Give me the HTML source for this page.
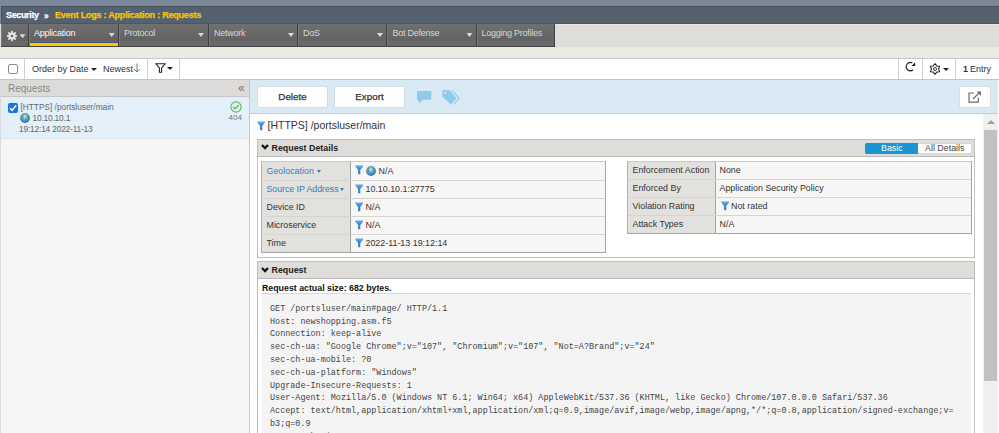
<!DOCTYPE html>
<html><head><meta charset="utf-8">
<style>
*{box-sizing:border-box;margin:0;padding:0}
html,body{width:999px;height:433px;overflow:hidden;background:#f7f6f4;font-family:"Liberation Sans",sans-serif;position:relative}
.a{position:absolute;white-space:nowrap}
svg{position:absolute;overflow:visible}
#top{left:0;top:0;width:999px;height:24px;background:#7b899a}
#hdr{left:1px;top:6px;width:998px;height:18px;background:#55616f;border-top:1px solid #454e58;border-left:1px solid #4a535d;box-shadow:inset 0 -1px 0 #4c5560}
#hdr .t{font-size:9px;font-weight:bold;top:3px;letter-spacing:-0.1px;-webkit-text-stroke:0.25px currentColor}
#tabrow{left:0;top:24px;width:999px;height:23px;background:#dfddd8;border-top:1px solid #e9e7e3}
.tab{top:24px;height:23px;background:linear-gradient(#707070,#626262 75%,#6a6a6a 76%,#686868);border-right:1px solid #3f3f3f;border-bottom:1px solid #454545;box-shadow:inset 1px 0 0 #787878;color:#d6d6d6;font-size:9px;letter-spacing:-0.25px}
.tab span{position:absolute;top:4px;left:5px}
.tab i{position:absolute;top:9px;width:6px;height:4px;background:linear-gradient(to bottom right,transparent 50%,#dadada 50%) ;clip-path:polygon(0 0,100% 0,50% 100%);background:#dadada}
#band{left:0;top:47px;width:999px;height:11px;background:#ebe9e4}
#tb{left:0;top:58px;width:999px;height:22px;background:#fff;border-top:1px solid #c9c9c9;border-bottom:1px solid #c4c4c4}
.sep{top:59px;width:1px;height:20px;background:#cfcfcf}
.tbt{top:64px;font-size:9px;color:#333}
#lp{left:0;top:80px;width:250px;height:353px;background:#f7f6f4;border-left:1px solid #dcdcdc;border-right:1px solid #c8c8c8}
#lph{left:1px;top:80px;width:248px;height:17px;background:#dcdbd9;border-bottom:1px solid #c6c6c6;color:#888;font-size:10px}
#row{left:1px;top:97px;width:248px;height:42px;background:#e4f0f9;border-bottom:1px solid #dde6ee}
.rt{font-size:8.3px;color:#666}
#rp{left:250px;top:80px;width:749px;height:353px;background:#fff}
#ab{left:250px;top:80px;width:748px;height:34px;background:#d9eaf5;border-bottom:1px solid #c2ccd4}
.btn{top:86px;height:22px;padding-top:0px;background:#fff;border:1px solid #d4dde4;border-radius:2px;color:#333;font-size:9.8px;text-align:center;line-height:19px;-webkit-text-stroke:0.25px #333}
.sec{left:257px;width:718px;border:1px solid #c0c0c0;background:#fff}
.sech{left:258px;width:716px;height:17px;background:#dfddd9;border-bottom:1px solid #bababa;font-size:8.9px;font-weight:bold;color:#222}
.sech span{top:3px}
.tbl{background:#f7f6f4;border:1px solid #b0b0b0;border-top-color:#cacaca;border-right-color:#a6a6a6;border-bottom-color:#a3a3a3}
.lcol{background:#e3e1dd}
.rl{height:1px;background:#d4d4d2}
.tt{font-size:8.9px;color:#333;margin-top:1px}
.lk{color:#3a7cc0}
#code{left:262px;top:293px;width:709px;height:140px;background:#f4f4f4;border-top:1px solid #d8d8d8;font-family:"Liberation Mono",monospace;font-size:8.45px;line-height:12.8px;color:#444;padding:8.8px 0 0 8px;white-space:pre}
#sb{left:983px;top:114px;width:15px;height:319px;background:#f0f0f0}
#thumb{left:984px;top:130px;width:13px;height:251px;background:#c1c1c1}
.caret{position:absolute;width:0;height:0;border-left:3px solid transparent;border-right:3px solid transparent;border-top:3px solid #222}
</style></head><body>
<svg width="0" height="0" style="left:0;top:0"><defs>
<linearGradient id="fb" x1="0" y1="0" x2="0" y2="1"><stop offset="0" stop-color="#92c6ef"/><stop offset="0.15" stop-color="#5fa2e2"/><stop offset="0.4" stop-color="#3b88d6"/><stop offset="1" stop-color="#3380d0"/></linearGradient>
<radialGradient id="gl" cx="0.45" cy="0.35" r="0.7"><stop offset="0" stop-color="#cde6f8"/><stop offset="0.45" stop-color="#5b9ede"/><stop offset="1" stop-color="#2a62a8"/></radialGradient>
<symbol id="fun" viewBox="0 0 9 10"><path d="M0.3 0.3H8.1V1.5L5.3 4.9V9.2H3.1V4.9L0.3 1.5Z" fill="url(#fb)"/></symbol>
<symbol id="glb" viewBox="0 0 10 10"><circle cx="5" cy="5" r="4.9" fill="url(#gl)"/><path d="M1.2 3.2C2 1.8 3.2 1 4.6 1C4.2 2 3.6 2.6 2.8 2.8C3.8 3.6 3.6 5 3.2 5.8C2.4 6.2 1.6 6 0.8 5.8C0.5 4.9 0.7 4 1.2 3.2Z" fill="#5cb04a"/><path d="M7.6 2.2C8.6 3 9.4 4.2 9.4 5.6C9 7 8.4 8 7.4 8.8C7.6 7.6 8.2 6.6 8 5.4C7.8 4.2 7.4 3.2 7.6 2.2Z" fill="#4aa040"/><path d="M2.4 8.2C3 8.8 3.8 9.2 4.6 9.4C4 8.8 3.2 8.4 2.4 8.2Z" fill="#4aa040"/></symbol>
</defs></svg>
<div class="a" id="top"></div>
<div class="a" id="hdr">
  <span class="a t" style="left:4px;color:#fff;letter-spacing:-0.35px">Security</span>
  <span class="a t" style="left:42px;top:3.5px;color:#fff;font-size:8.5px">&#187;</span>
  <span class="a t" style="left:53px;color:#f7c600;letter-spacing:-0.22px">Event Logs : Application : Requests</span>
</div>
<div class="a" id="tabrow"></div>
<div class="a tab" style="left:1px;width:28px">
 <svg width="12" height="12" style="left:5px;top:6px" viewBox="0 0 12 12"><g fill="#e8e8e8"><circle cx="6" cy="6" r="3.6"/><g id="tth"><rect x="5.2" y="0.8" width="1.6" height="10.4"/><rect x="0.8" y="5.2" width="10.4" height="1.6"/></g><use href="#tth" transform="rotate(45 6 6)"/></g><circle cx="6" cy="6" r="1.3" fill="#5e5e5e"/></svg>
 <i style="left:18.5px;top:10.3px"></i></div>
<div class="a tab" style="left:29px;width:90px;color:#fafafa"><span>Application</span><i style="left:79.7px"></i></div>
<div class="a" style="left:30px;top:42px;width:88px;height:1px;background:#4a5470"></div><div class="a" style="left:30px;top:43px;width:88px;height:3px;background:#f5cc00"></div>
<div class="a tab" style="left:119px;width:90px"><span>Protocol</span><i style="left:79px"></i></div>
<div class="a tab" style="left:209px;width:89px"><span>Network</span><i style="left:79px"></i></div>
<div class="a tab" style="left:298px;width:89px"><span>DoS</span><i style="left:79px"></i></div>
<div class="a tab" style="left:387px;width:90px"><span style="left:5.5px">Bot Defense</span><i style="left:79.5px"></i></div>
<div class="a tab" style="left:477px;width:78px"><span style="left:4.5px">Logging Profiles</span></div>
<div class="a" id="band"></div>
<div class="a" id="tb"></div>
<div class="a sep" style="left:24px"></div>
<div class="a sep" style="left:147px"></div>
<div class="a sep" style="left:179px"></div>
<div class="a sep" style="left:898px"></div>
<div class="a sep" style="left:922px"></div>
<div class="a sep" style="left:955px"></div>
<div class="a" style="left:8px;top:64px;width:10px;height:10px;border:1px solid #8a8a8a;border-radius:2px;background:#fff"></div>
<span class="a tbt" style="left:32px">Order by Date</span>
<div class="caret" style="left:91px;top:68px"></div>
<span class="a tbt" style="left:103px">Newest</span>
<svg width="8" height="10" style="left:133px;top:63px" viewBox="0 0 8 10"><path d="M4 0.5V9M1 6L4 9L7 6" stroke="#666" stroke-width="0.9" fill="none"/></svg>
<svg width="11" height="10" style="left:155px;top:63px" viewBox="0 0 11 10"><path d="M0.7 0.7H10.3L6.6 4.8V9.2H4.4V4.8Z" stroke="#222" stroke-width="1.1" fill="none" stroke-linejoin="round"/></svg>
<div class="caret" style="left:167px;top:67px"></div>
<svg width="11" height="11" style="left:905px;top:62px" viewBox="0 0 11 11"><path d="M7.4 1.1A4.1 4.1 0 1 0 8.2 7.6" stroke="#222" stroke-width="1.15" fill="none"/><path d="M6.4 4.1H10.1V0.4Z" fill="#222"/></svg>
<svg width="12" height="12" style="left:929.2px;top:62.5px" viewBox="0 0 12 12"><path d="M6.00 0.70 L7.78 2.93 L10.59 3.35 L9.55 6.00 L10.59 8.65 L7.78 9.07 L6.00 11.30 L4.23 9.07 L1.41 8.65 L2.45 6.00 L1.41 3.35 L4.22 2.93Z" stroke="#222" stroke-width="1.05" fill="none" stroke-linejoin="round"/><circle cx="6" cy="6" r="1.5" stroke="#222" stroke-width="0.9" fill="none"/></svg>
<div class="caret" style="left:943px;top:68px"></div>
<span class="a tbt" style="left:963px;font-weight:bold">1</span>
<span class="a tbt" style="left:970px">Entry</span>

<div class="a" id="lp"></div>
<div class="a" id="lph"><span class="a" style="left:7px;top:3px">Requests</span><span class="a" style="left:237px;top:1px;font-size:12px;color:#777">&#171;</span></div>
<div class="a" id="row"></div>
<div class="a" style="left:8px;top:103px;width:10px;height:10px;background:#1a73e8;border-radius:2px"></div>
<svg width="10" height="10" style="left:8px;top:103px" viewBox="0 0 10 10"><path d="M2 5.2L4 7.3L8.2 2.6" stroke="#fff" stroke-width="1.5" fill="none"/></svg>
<span class="a rt" style="left:20.5px;top:102px">[HTTPS] /portsluser/main</span>
<svg width="10" height="10" style="left:19.5px;top:113px" viewBox="0 0 10 10"><use href="#glb"/></svg>
<span class="a rt" style="left:32.5px;top:113px;font-size:8.4px;letter-spacing:-0.2px">10.10.10.1</span>
<span class="a rt" style="left:19px;top:123.5px;font-size:8.4px;letter-spacing:-0.19px">19:12:14 2022-11-13</span>
<svg width="12" height="12" style="left:230.3px;top:101.4px" viewBox="0 0 12 12"><circle cx="6" cy="6" r="5.1" stroke="#5cbf5c" stroke-width="1.2" fill="none"/><path d="M3.4 6L5.2 7.8L8.6 4.3" stroke="#5cbf5c" stroke-width="1.4" fill="none"/></svg>
<span class="a rt" style="left:228.5px;top:113px;font-size:8px;color:#777">404</span>

<div class="a" id="rp"></div>
<div class="a" id="ab"></div>
<div class="a btn" style="left:257px;width:71px">Delete</div>
<div class="a btn" style="left:334px;width:71px">Export</div>
<div class="a btn" style="left:959px;width:32px"></div>
<svg width="15" height="13" style="left:416.5px;top:91px" viewBox="0 0 15 13"><path d="M0 0H14.3V8.8H5.9L2.5 12.6L0.9 8.8H0Z" fill="#8dcbed"/></svg>
<svg width="19" height="15" style="left:441.5px;top:89.5px" viewBox="0 0 19 15"><path d="M0.3 0.2H7.8L14.6 8.3L9 14.5L0.3 6.5Z" fill="#8dcbed"/><circle cx="3.4" cy="3" r="1.1" fill="#d9eaf5"/><path d="M9.3 0.2H10.8L17.8 8.3L12.4 14.5H11L16.3 8.3Z" fill="#8dcbed"/></svg>
<svg width="15" height="13" style="left:968px;top:90.5px" viewBox="0 0 15 13"><path d="M6 2H1V11.2H10.3V6.5" stroke="#6f6f6f" stroke-width="1.2" fill="none"/><path d="M5 8L12 1" stroke="#6f6f6f" stroke-width="1.2"/><path d="M8.6 0.4H13V4.8Z" fill="#6f6f6f"/></svg>

<svg width="9" height="10" style="left:257.2px;top:121.3px" viewBox="0 0 9 10"><use href="#fun"/></svg>
<span class="a" style="left:267.5px;top:119px;font-size:10.5px;color:#333">[HTTPS] /portsluser/main</span>

<div class="a sec" style="top:139px;height:119px"></div>
<div class="a sech" style="top:140px"><span class="a" style="left:13.5px">Request Details</span></div>
<svg width="9" height="6" style="left:261px;top:144.3px" viewBox="0 0 9 6"><path d="M1 1L4 4L7 1" stroke="#111" stroke-width="2.3" fill="none"/></svg>
<div class="a" style="left:865px;top:143px;width:107px;height:11px;border:1px solid #d6d6d6;background:#fff;border-radius:2px"></div>
<div class="a" style="left:865px;top:143px;width:53px;height:11px;background:#1b94d1;border-radius:2px 0 0 2px"></div>
<span class="a" style="left:881px;top:143px;font-size:8.9px;color:#fff">Basic</span>
<span class="a" style="left:925px;top:143px;font-size:8.9px;color:#444">All Details</span>

<div class="a tbl" style="left:261px;top:161px;width:345px;height:92px"></div>
<div class="a lcol" style="left:262px;top:162px;width:88px;height:90px"></div>
<div class="a" style="left:350px;top:162px;width:1px;height:90px;background:#a3a3a3"></div>
<div class="a rl" style="left:262px;top:180px;width:343px"></div>
<div class="a rl" style="left:262px;top:198px;width:343px"></div>
<div class="a rl" style="left:262px;top:216px;width:343px"></div>
<div class="a rl" style="left:262px;top:234px;width:343px"></div>
<span class="a tt lk" style="left:266.5px;top:164.5px">Geolocation</span>
<div class="caret" style="border-top-color:#3a7cc0;left:316.5px;top:170px;border-width:3px 2.7px 0 2.7px"></div>
<svg width="9" height="10" style="left:355px;top:165.4px" viewBox="0 0 9 10"><use href="#fun"/></svg>
<svg width="10" height="10" style="left:365.5px;top:165.7px" viewBox="0 0 10 10"><use href="#glb"/></svg>
<span class="a tt" style="left:378.5px;top:164.5px">N/A</span>
<span class="a tt lk" style="left:266.5px;top:183.0px;letter-spacing:-0.08px">Source IP Address</span>
<div class="caret" style="border-top-color:#3a7cc0;left:339.8px;top:188.2px;border-width:3px 2.7px 0 2.7px"></div>
<svg width="9" height="10" style="left:355px;top:183.9px" viewBox="0 0 9 10"><use href="#fun"/></svg>
<span class="a tt" style="left:365.5px;top:183.0px">10.10.10.1:27775</span>
<span class="a tt" style="left:266.5px;top:201.0px">Device ID</span>
<svg width="9" height="10" style="left:355px;top:201.9px" viewBox="0 0 9 10"><use href="#fun"/></svg>
<span class="a tt" style="left:365.5px;top:201.0px">N/A</span>
<span class="a tt" style="left:266.5px;top:219.0px">Microservice</span>
<svg width="9" height="10" style="left:355px;top:219.9px" viewBox="0 0 9 10"><use href="#fun"/></svg>
<span class="a tt" style="left:365.5px;top:219.0px">N/A</span>
<span class="a tt" style="left:266.5px;top:237.0px">Time</span>
<svg width="9" height="10" style="left:355px;top:237.9px" viewBox="0 0 9 10"><use href="#fun"/></svg>
<span class="a tt" style="left:365.5px;top:237.0px">2022-11-13 19:12:14</span>
<div class="a tbl" style="left:627px;top:161px;width:345px;height:73px"></div>
<div class="a lcol" style="left:628px;top:162px;width:87px;height:71px"></div>
<div class="a" style="left:715px;top:162px;width:1px;height:71px;background:#a3a3a3"></div>
<div class="a rl" style="left:628px;top:179px;width:343px"></div>
<div class="a rl" style="left:628px;top:197px;width:343px"></div>
<div class="a rl" style="left:628px;top:215px;width:343px"></div>
<span class="a tt" style="left:632.5px;top:164.0px">Enforcement Action</span>
<span class="a tt" style="left:719.5px;top:164.0px">None</span>
<span class="a tt" style="left:632.5px;top:182.0px">Enforced By</span>
<span class="a tt" style="left:719.5px;top:182.0px">Application Security Policy</span>
<span class="a tt" style="left:632.5px;top:200.0px">Violation Rating</span>
<svg width="9" height="10" style="left:720.5px;top:200.9px" viewBox="0 0 9 10"><use href="#fun"/></svg>
<span class="a tt" style="left:731px;top:200.0px">Not rated</span>
<span class="a tt" style="left:632.5px;top:218.0px">Attack Types</span>
<span class="a tt" style="left:719.5px;top:218.0px">N/A</span>

<div class="a sec" style="top:261px;height:200px"></div>
<div class="a sech" style="top:262px"><span class="a" style="left:13.5px">Request</span></div>
<svg width="9" height="6" style="left:261px;top:266.5px" viewBox="0 0 9 6"><path d="M1 1L4 4L7 1" stroke="#111" stroke-width="2.3" fill="none"/></svg>
<span class="a" style="left:262px;top:283px;font-size:8.8px;font-weight:bold;color:#111">Request actual size: 682 bytes.</span>

<div class="a" id="code">GET /portsluser/main#page/ HTTP/1.1
Host: newshopping.asm.f5
Connection: keep-alive
sec-ch-ua: "Google Chrome";v="107", "Chromium";v="107", "Not=A?Brand";v="24"
sec-ch-ua-mobile: ?0
sec-ch-ua-platform: "Windows"
Upgrade-Insecure-Requests: 1
User-Agent: Mozilla/5.0 (Windows NT 6.1; Win64; x64) AppleWebKit/537.36 (KHTML, like Gecko) Chrome/107.0.0.0 Safari/537.36
Accept: text/html,application/xhtml+xml,application/xml;q=0.9,image/avif,image/webp,image/apng,*/*;q=0.8,application/signed-exchange;v=
b3;q=0.9
Sec-Fetch-Site: none</div>

<div class="a" id="sb"></div>
<div class="a" id="thumb"></div>
<div class="caret" style="left:987px;top:120px;border-top:0;border-bottom:4px solid #a0a0a0;border-left-width:4px;border-right-width:4px"></div>
</body></html>
